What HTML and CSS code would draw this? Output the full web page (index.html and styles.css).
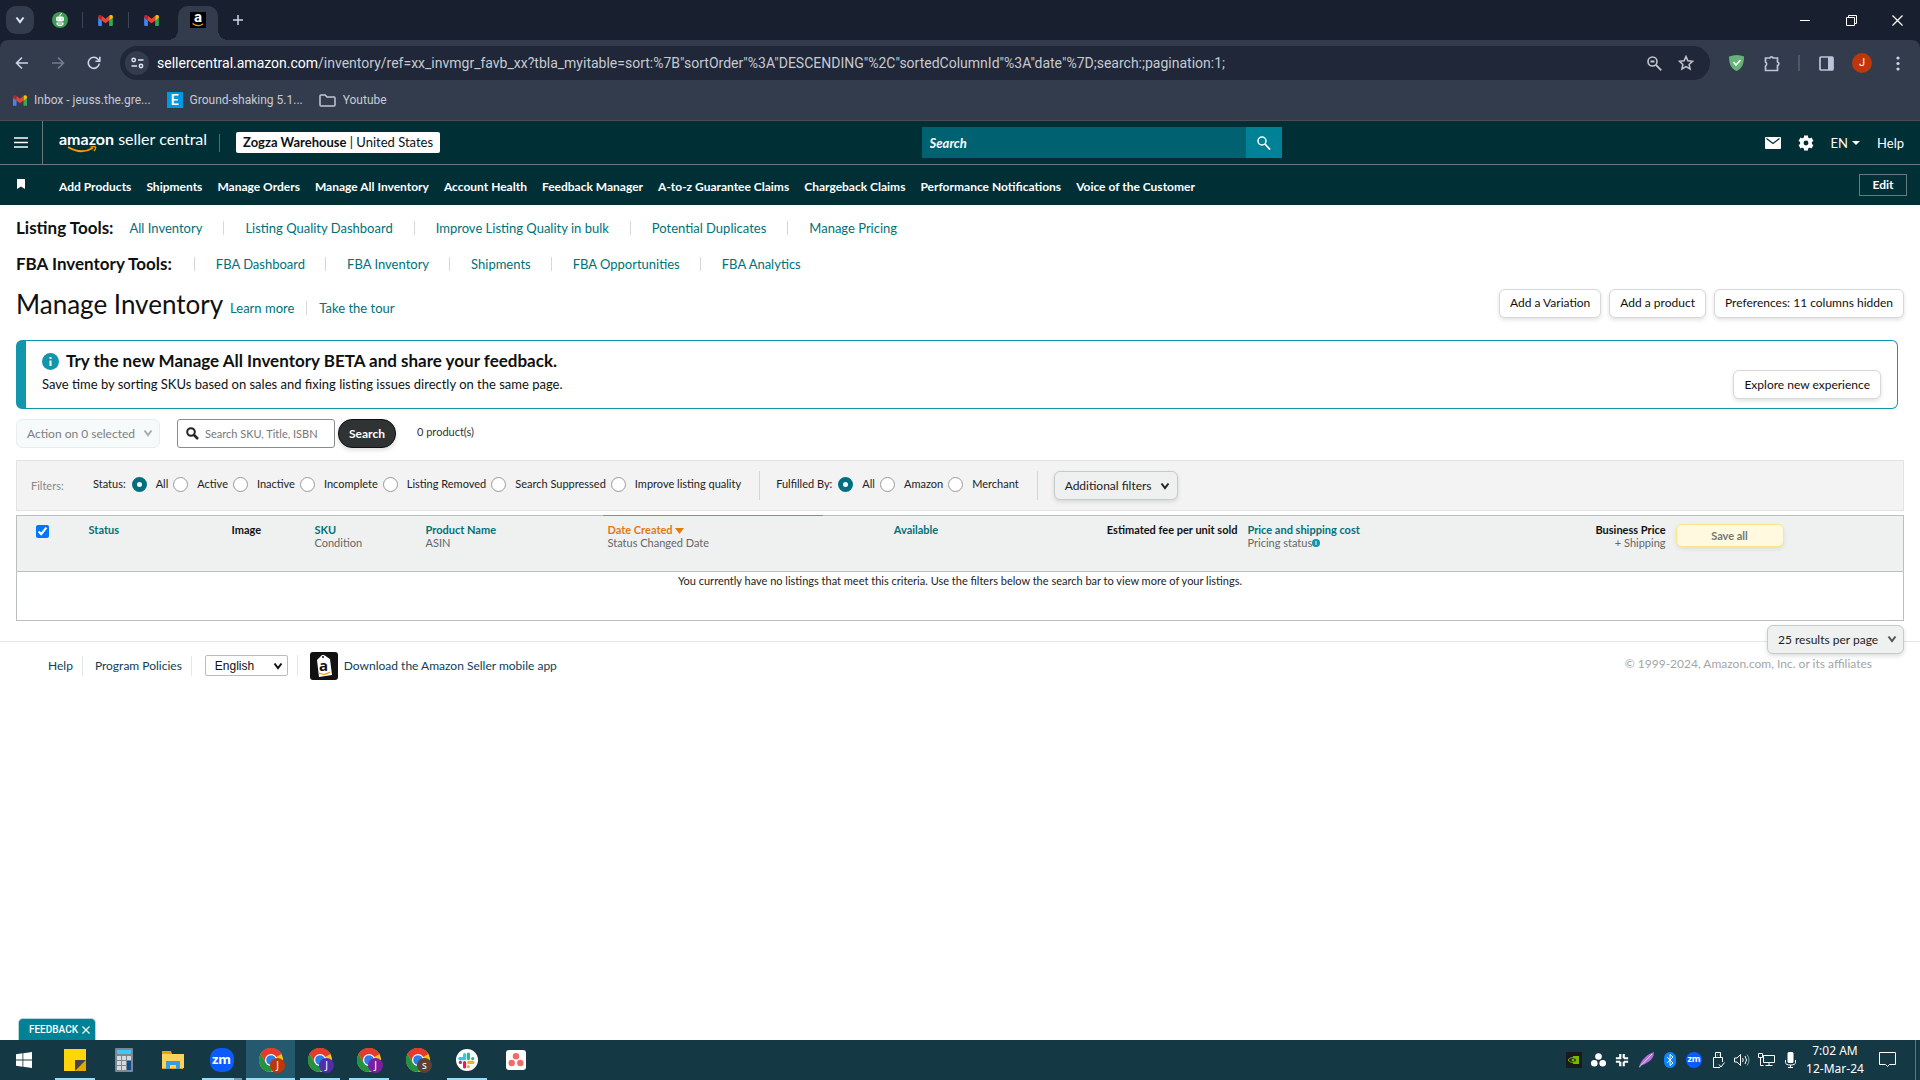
FILE: index.html
```html
<!DOCTYPE html>
<html lang="en">
<head>
<meta charset="utf-8">
<title>Manage Inventory</title>
<link rel="stylesheet" href="styles.css">
</head>
<body>
<svg class="defs" aria-hidden="true">
  <symbol id="gmail" viewBox="0 0 16 12">
    <path d="M0 1.5V11a1 1 0 0 0 1 1h3V4.5z" fill="#4285f4"/>
    <path d="M16 1.5V11a1 1 0 0 1-1 1h-3V4.5z" fill="#34a853"/>
    <path d="M12 .8 13.4 0C15 -.3 16 .6 16 1.8V3l-4 3z" fill="#fbbc04"/>
    <path d="M4 .8 2.6 0C1 -.3 0 .6 0 1.8V3l4 3z" fill="#c5221f"/>
    <path d="M4 .9 8 4l4-3.1V6L8 9 4 6z" fill="#ea4335"/>
  </symbol>
  <symbol id="chrome" viewBox="0 0 24 24">
    <circle cx="12" cy="12" r="12" fill="#fbc116"/>
    <path d="M12 12 1.6 6A12 12 0 0 1 22.4 6z" fill="#e33b2e"/>
    <path d="M12 6h10.4A12 12 0 0 0 1.6 6L7 15z" fill="#e33b2e"/>
    <path d="M1.6 6A12 12 0 0 0 12 24l5.2-9L12 12 6.8 15z" fill="#229342"/>
    <circle cx="12" cy="12" r="6" fill="#fff"/>
    <circle cx="12" cy="12" r="4.8" fill="#2b7de9"/>
  </symbol>
  <symbol id="chevron" viewBox="0 0 10 8">
    <path d="M1.5 1.5 5 6l3.500-4.500" fill="none" stroke="currentColor" stroke-width="2"/>
  </symbol>
  <symbol id="slack" viewBox="0 0 16 16">
    <g stroke-width="3" stroke-linecap="round">
      <path d="M6.200 2.500v3.500M1.800 6.200h1" stroke="#36c5f0"/><path d="M2 6.200h4" stroke="#36c5f0"/>
      <path d="M9.800 2v4.200M13.800 6.200h.1" stroke="#2eb67d"/>
      <path d="M10 9.800h4M9.800 13.800v.1" stroke="#ecb22e"/>
      <path d="M6.200 10v4M2.200 9.800h.1" stroke="#e01e5a"/>
    </g>
  </symbol>
</svg>

<header class="browser">
  <div class="tabs">
    <button class="tab-search" aria-label="Search tabs"><svg width="10" height="8"><use href="#chevron"/></svg></button>
    <button class="tab tab-line" aria-label="Tab 1"><svg width="16" height="16" viewBox="0 0 16 16"><circle cx="8" cy="8" r="8" fill="#3f9a52"/><path d="M8 4.500V2.500l2-1" stroke="#fff" fill="none"/><rect x="4" y="4.500" width="8" height="5" rx="2" fill="#fff"/><path d="M4.500 10.500h7v2l-2 1.500h-3l-2-1.500z" fill="#fff"/><path d="M6 6.500v1M10 6.500v1M6 12h4" stroke="#3f9a52"/></svg></button>
    <button class="tab tab-line" aria-label="Tab 2"><svg width="15" height="11"><use href="#gmail"/></svg></button>
    <button class="tab" aria-label="Tab 3"><svg width="15" height="11"><use href="#gmail"/></svg></button>
    <button class="tab tab-active" aria-label="Amazon"><span class="fav-a">a<svg width="12" height="4" viewBox="0 0 12 4"><path d="M.5.5Q6 4.500 11 1" fill="none" stroke="#f90" stroke-width="1.300"/></svg></span></button>
    <button class="tab-new" aria-label="New tab"><svg width="12" height="12" viewBox="0 0 12 12"><path d="M6 1v10M1 6h10" stroke="#cdd3ea" stroke-width="1.500"/></svg></button>
    <div class="win">
      <button aria-label="Minimize"><svg width="10" height="10" viewBox="0 0 10 10"><path d="M0 5.500h10" stroke="#fff"/></svg></button>
      <button aria-label="Restore"><svg width="11" height="11" viewBox="0 0 11 11"><path d="M.5 2.500h8v8h-8zM2.500 2.500v-2h8v8h-2" fill="none" stroke="#fff"/></svg></button>
      <button aria-label="Close"><svg width="11" height="11" viewBox="0 0 11 11"><path d="m.5.5 10 10M10.500.5l-10 10" stroke="#fff" stroke-width="1.200"/></svg></button>
    </div>
  </div>
  <div class="toolbar">
    <button class="tool" aria-label="Back"><svg width="14" height="14" viewBox="0 0 14 14"><path d="M13 7H2M7 1.500 1.500 7 7 12.500" fill="none" stroke="#cdd3ea" stroke-width="1.600"/></svg></button>
    <button class="tool" aria-label="Forward"><svg width="14" height="14" viewBox="0 0 14 14"><path d="M1 7h11M7 1.500 12.500 7 7 12.500" fill="none" stroke="#757d90" stroke-width="1.600"/></svg></button>
    <button class="tool" aria-label="Reload"><svg width="14" height="14" viewBox="0 0 14 14"><path d="M12.300 7.500A5.500 5.500 0 1 1 11 3.200l1.500 1.600M12.800.8v4.400H8.400" fill="none" stroke="#cdd3ea" stroke-width="1.600"/></svg></button>
    <div class="omnibox">
      <button class="site" aria-label="Site information"><svg width="13" height="12" viewBox="0 0 13 12"><circle cx="2.700" cy="3" r="1.700" fill="none" stroke="#dfe3f2" stroke-width="1.500"/><path d="M7 3h5.500M.5 9H6" stroke="#dfe3f2" stroke-width="1.600"/><circle cx="10" cy="9" r="1.700" fill="none" stroke="#dfe3f2" stroke-width="1.500"/></svg></button>
      <div class="url" role="textbox" aria-label="Address"><b>sellercentral.amazon.com</b>/inventory/ref=xx_invmgr_favb_xx?tbla_myitable=sort:%7B"sortOrder"%3A"DESCENDING"%2C"sortedColumnId"%3A"date"%7D;search:;pagination:1;</div>
      <button class="omni-btn" aria-label="Zoom"><svg width="15" height="15" viewBox="0 0 15 15"><circle cx="5.500" cy="5.500" r="4.500" fill="none" stroke="#c3c6cf" stroke-width="1.600"/><path d="M3.500 5.500h4M9 9l5.300 5.300" stroke="#c3c6cf" stroke-width="1.800"/></svg></button>
      <button class="omni-btn" aria-label="Bookmark"><svg width="16" height="16" viewBox="0 0 16 16"><path d="m8 1.500 1.900 4.300 4.700.5-3.500 3.100 1 4.600L8 11.600 3.900 14l1-4.600L1.400 6.300l4.700-.5z" fill="none" stroke="#c3c6cf" stroke-width="1.500"/></svg></button>
    </div>
    <button class="tool" aria-label="Extension"><svg width="15" height="16" viewBox="0 0 15 16"><path d="M0 1.500Q8-1.500 15 1.500C15 9 13 13.500 7.500 16 2 13.500 0 9 0 1.500" fill="#67b279"/><path d="m4.500 7 2.500 3 4.500-5" fill="none" stroke="#fff" stroke-width="1.500"/></svg></button>
    <button class="tool" aria-label="Extensions"><svg width="17" height="17" viewBox="0 0 17 17"><path d="M1.500 3h4.300a1.800 1.800 0 0 1 3.400 0h4.300v4a1.800 1.800 0 0 1 0 3.500v5h-12v-4.500a2.300 2.300 0 0 0 0-4z" fill="none" stroke="#bcc4dc" stroke-width="1.700"/></svg></button>
    <span class="tool-line"></span>
    <button class="tool" aria-label="Side panel"><svg width="15" height="15" viewBox="0 0 15 15"><rect x="1" y="1" width="13" height="13" rx="1" fill="none" stroke="#bcc4dc" stroke-width="1.700"/><path d="M9 1h5v13H9z" fill="#bcc4dc"/></svg></button>
    <button class="tool" aria-label="Profile"><span class="avatar">J</span></button>
    <button class="tool" aria-label="Menu"><svg width="4" height="15" viewBox="0 0 4 15"><g fill="#cdd3ea"><circle cx="2" cy="2" r="1.600"/><circle cx="2" cy="7.500" r="1.600"/><circle cx="2" cy="13" r="1.600"/></g></svg></button>
  </div>
  <nav class="bookmarks" aria-label="Bookmarks">
    <a href="#"><svg width="14" height="11"><use href="#gmail"/></svg>Inbox - jeuss.the.gre...</a>
    <a href="#"><span class="fav-e">E</span>Ground-shaking 5.1...</a>
    <a href="#"><svg width="17" height="13" viewBox="0 0 17 13"><path d="M1 2q0-1 1-1h4.200L8 3h7q1 0 1 1v7q0 1-1 1H2q-1 0-1-1z" fill="none" stroke="#c3c6cf" stroke-width="1.500"/></svg>Youtube</a>
  </nav>
</header>

<div class="page">
  <header class="sc-top">
    <div class="sc-left">
      <button class="burger" aria-label="Menu"><svg width="14" height="11" viewBox="0 0 14 11"><path d="M0 1h14M0 5.500h14M0 10h14" stroke="#fff" stroke-width="1.500"/></svg></button>
      <a class="logo" href="#"><span><b>amazon</b> seller central</span><svg width="30" height="7" viewBox="0 0 30 7"><path d="M1 1q13 8 25 1" fill="none" stroke="#f90" stroke-width="1.800"/><path d="M23.500 1q4-.8 5 0t-1.500 4" fill="none" stroke="#f90" stroke-width="1.300"/></svg></a>
      <span class="sc-line"></span>
      <button class="store"><b>Zogza Warehouse</b> | United States</button>
    </div>
    <form class="sc-search">
      <input type="search" placeholder="Search" aria-label="Search">
      <button type="button" aria-label="Search"><svg width="14" height="14" viewBox="0 0 14 14"><circle cx="5" cy="5" r="4" fill="none" stroke="#fff" stroke-width="1.500"/><path d="m8 8 5 5.500" stroke="#fff" stroke-width="1.800"/></svg></button>
    </form>
    <div class="sc-right">
      <a href="#" aria-label="Messages"><svg width="16" height="12" viewBox="0 0 16 12"><rect width="16" height="12" rx="1" fill="#fff"/><path d="m1.500 1.500 6.500 5 6.500-5" fill="none" stroke="#002f36" stroke-width="1.300"/></svg></a>
      <a href="#" aria-label="Settings"><svg width="16" height="16" viewBox="0 0 16 16"><path d="M8 4.500v-4M8 11.500v4M5 6.200 1.500 4.300M11 9.800l3.500 1.900M5 9.800l-3.500 1.900M11 6.200l3.500-1.900" stroke="#fff" stroke-width="4"/><circle cx="8" cy="8" r="4.200" fill="none" stroke="#fff" stroke-width="3.500"/></svg></a>
      <a href="#" class="lang">EN <svg width="8" height="4" viewBox="0 0 8 4"><path d="M0 0h8L4 4z" fill="#fff"/></svg></a>
      <a href="#">Help</a>
    </div>
  </header>
  <nav class="sc-nav" aria-label="Favorites">
    <svg class="mark" width="8" height="10" viewBox="0 0 8 10"><path d="M0 0h8v10L4 7.500 0 10z" fill="#fff"/></svg>
    <a href="#">Add Products</a><a href="#">Shipments</a><a href="#">Manage Orders</a><a href="#">Manage All Inventory</a><a href="#">Account Health</a><a href="#">Feedback Manager</a><a href="#">A-to-z Guarantee Claims</a><a href="#">Chargeback Claims</a><a href="#">Performance Notifications</a><a href="#">Voice of the Customer</a>
    <button class="edit">Edit</button>
  </nav>

  <main class="main">
    <nav class="links" aria-label="Listing tools"><h2>Listing Tools:</h2><a href="#">All Inventory</a><a href="#">Listing Quality Dashboard</a><a href="#">Improve Listing Quality in bulk</a><a href="#">Potential Duplicates</a><a href="#">Manage Pricing</a></nav>
    <nav class="links links-fba" aria-label="FBA inventory tools"><h2>FBA Inventory Tools:</h2><a href="#">FBA Dashboard</a><a href="#">FBA Inventory</a><a href="#">Shipments</a><a href="#">FBA Opportunities</a><a href="#">FBA Analytics</a></nav>

    <div class="title">
      <h1>Manage Inventory</h1>
      <a href="#">Learn more</a><a href="#" class="tour">Take the tour</a>
      <div class="title-actions">
        <button class="btn">Add a Variation</button>
        <button class="btn">Add a product</button>
        <button class="btn">Preferences: 11 columns hidden</button>
      </div>
    </div>

    <section class="alert">
      <div>
        <h2><svg width="17" height="17" viewBox="0 0 17 17"><circle cx="8.500" cy="8.500" r="8.500" fill="#1196ab"/><path d="M8.500 7.500v5.500M8.500 4v2" stroke="#fff" stroke-width="2"/></svg>Try the new Manage All Inventory BETA and share your feedback.</h2>
        <p>Save time by sorting SKUs based on sales and fixing listing issues directly on the same page.</p>
      </div>
      <button class="btn">Explore new experience</button>
    </section>

    <form class="actions">
      <span class="pick pick-off"><select aria-label="Bulk action" disabled><option>Action on 0 selected</option></select><svg width="10" height="8"><use href="#chevron"/></svg></span>
      <label class="sku"><svg width="13" height="13" viewBox="0 0 13 13"><circle cx="5" cy="5" r="3.800" fill="none" stroke="#222" stroke-width="2"/><path d="m8 8 4 4" stroke="#222" stroke-width="2.500"/></svg><input type="text" aria-label="Search inventory" placeholder="Search SKU, Title, ISBN"></label>
      <button type="button" class="go">Search</button>
      <span class="count">0 product(s)</span>
    </form>

    <form class="filters">
      <span class="f-name">Filters:</span>
      <fieldset>
        <span class="f-lab">Status:</span>
        <label><input type="radio" name="status" checked>All</label>
        <label><input type="radio" name="status">Active</label>
        <label><input type="radio" name="status">Inactive</label>
        <label><input type="radio" name="status">Incomplete</label>
        <label><input type="radio" name="status">Listing Removed</label>
        <label><input type="radio" name="status">Search Suppressed</label>
        <label><input type="radio" name="status">Improve listing quality</label>
      </fieldset>
      <fieldset>
        <span class="f-lab">Fulfilled By:</span>
        <label><input type="radio" name="by" checked>All</label>
        <label><input type="radio" name="by">Amazon</label>
        <label><input type="radio" name="by">Merchant</label>
      </fieldset>
      <button type="button" class="btn btn-gray">Additional filters<svg width="10" height="8"><use href="#chevron"/></svg></button>
    </form>

    <table class="grid">
      <colgroup><col class="c-check"><col class="c-status"><col class="c-image"><col class="c-sku"><col class="c-name"><col class="c-date"><col class="c-avail"><col class="c-fee"><col class="c-price"><col class="c-biz"><col></colgroup>
      <thead>
        <tr>
          <th class="check"><input type="checkbox" checked aria-label="Select all"></th>
          <th><a href="#">Status</a></th>
          <th>Image</th>
          <th><a href="#">SKU</a><small>Condition</small></th>
          <th><a href="#">Product Name</a><small>ASIN</small></th>
          <th class="sorted"><a href="#">Date Created <svg width="9" height="6" viewBox="0 0 9 6"><path d="M0 0h9L4.500 6z" fill="#e47911"/></svg></a><small>Status Changed Date</small></th>
          <th class="mid"><a href="#">Available</a></th>
          <th class="end">Estimated fee per unit sold</th>
          <th><a href="#">Price and shipping cost</a><small>Pricing status<svg width="8" height="8" viewBox="0 0 8 8"><circle cx="4" cy="4" r="4" fill="#1196ab"/><path d="M4 2v4" stroke="#fff"/></svg></small></th>
          <th class="end">Business Price<small>+ Shipping</small></th>
          <th><button class="save">Save all</button></th>
        </tr>
      </thead>
      <tbody><tr><td colspan="11">You currently have no listings that meet this criteria. Use the filters below the search bar to view more of your listings.</td></tr></tbody>
    </table>
    <span class="pick per-page"><select aria-label="Results per page"><option>25 results per page</option></select><svg width="10" height="8"><use href="#chevron"/></svg></span>
  </main>

  <footer class="foot">
    <a href="#">Help</a>
    <a href="#">Program Policies</a>
    <span class="foot-lang"><select aria-label="Language"><option>English</option></select><svg width="10" height="8"><use href="#chevron"/></svg></span>
    <a href="#" class="app"><svg width="28" height="28" viewBox="0 0 28 28"><rect width="28" height="28" rx="3" fill="#111"/><path d="m7 8 5-5h2l6 4 2 16-13 2z" fill="#fff"/><circle cx="13" cy="5" r="1" fill="#111"/><text x="9" y="19" font-family="Open Sans, sans-serif" font-weight="700" font-size="15" fill="#111">a</text><path d="M9 21q6 3 11-1" fill="none" stroke="#f90" stroke-width="1.300"/></svg>Download the Amazon Seller mobile app</a>
    <small class="copy">© 1999-2024, Amazon.com, Inc. or its affiliates</small>
  </footer>
  <button class="feedback">FEEDBACK <svg width="8" height="8" viewBox="0 0 8 8"><path d="m.5.5 7 7M7.500.5l-7 7" stroke="#fff" stroke-width="1.200"/></svg></button>
</div>

<footer class="taskbar">
  <button class="start" aria-label="Start"><svg width="16" height="16" viewBox="0 0 16 16"><path d="M0 2.300 6.500 1.300v6.300H0zM7.300 1.200 16 0v7.600H7.300zM0 8.400h6.500v6.300L0 13.700zM7.300 8.400H16V16l-8.700-1.200z" fill="#fff"/></svg></button>
  <button class="app-btn open" aria-label="Sticky Notes"><svg width="22" height="22" viewBox="0 0 22 22"><path d="M0 0h22v22H0z" fill="#ffd60a"/><path d="M22 11v11H11z" fill="#e6a800"/><path d="M11 11h11L11 22z" fill="#444"/></svg></button>
  <button class="app-btn" aria-label="Calculator"><svg width="18" height="24" viewBox="0 0 18 24"><rect width="18" height="24" rx="1" fill="#7d8792"/><path d="M2 2h14v4H2z" fill="#40c8f4"/><path d="M2 8h4v4H2zM7 8h4v4H7zM12 8h4v4h-4zM2 13h4v4H2zM7 13h4v4H7zM2 18h4v4H2zM7 18h4v4H7z" fill="#d5dade"/><path d="M12 13h4v9h-4z" fill="#0d4d8c"/></svg></button>
  <button class="app-btn" aria-label="File Explorer"><svg width="22" height="18" viewBox="0 0 22 18"><path d="M0 0h9l1 3h11v15H0z" fill="#e5a50a"/><path d="M0 3h22v14H0z" fill="#fbd25c"/><path d="M4 18v-8h14v8h-4v-4H8v4z" fill="#3b9be0"/></svg></button>
  <button class="app-btn open stacked" aria-label="Zoom"><span class="zm">zm</span></button>
  <button class="app-btn active" aria-label="Chrome J"><svg width="24" height="24"><use href="#chrome"/></svg><span class="badge b-red">J</span></button>
  <button class="app-btn open" aria-label="Chrome J"><svg width="24" height="24"><use href="#chrome"/></svg><span class="badge b-indigo">J</span></button>
  <button class="app-btn open" aria-label="Chrome J"><svg width="24" height="24"><use href="#chrome"/></svg><span class="badge b-purple">J</span></button>
  <button class="app-btn" aria-label="Chrome S"><svg width="24" height="24"><use href="#chrome"/></svg><span class="badge b-brown">s</span></button>
  <button class="app-btn open" aria-label="Slack"><span class="slack"><svg width="17" height="17"><use href="#slack"/></svg></span></button>
  <button class="app-btn" aria-label="Asana"><svg width="20" height="20" viewBox="0 0 20 20"><rect width="20" height="20" rx="3" fill="#fff"/><g fill="#f06a6a"><circle cx="10" cy="6.200" r="3.200"/><circle cx="5.700" cy="13" r="3.200"/><circle cx="14.300" cy="13" r="3.200"/></g></svg></button>
  <div class="tray">
    <button aria-label="NVIDIA"><svg width="16" height="16" viewBox="0 0 16 16"><path d="M0 0h16v16H0z" fill="#1a1a1a"/><path d="M7 4h6v8H7z" fill="#76b900"/><path d="M2 8q4-5 9 0-5 5-9 0" fill="#1a1a1a" stroke="#76b900"/><circle cx="7" cy="8" r="1.500" fill="#76b900"/></svg></button>
    <button aria-label="Asana"><svg width="15" height="14" viewBox="0 0 15 14"><g fill="#fff"><circle cx="7.500" cy="3.500" r="3.300"/><circle cx="3.300" cy="10.300" r="3.300"/><circle cx="11.700" cy="10.300" r="3.300"/></g></svg></button>
    <button aria-label="Slack"><svg width="14" height="14" viewBox="0 0 16 16"><path d="M6 1v6M1 6h5M10 1v5M10 6h5M10 10h5M10 10v5M6 10v5M1 10h5" stroke="#fff" stroke-width="2.500"/></svg></button>
    <button aria-label="Pen"><svg width="15" height="16" viewBox="0 0 15 16"><path d="M0 15C2 8 8 2 15 0q0 6-5 9.500Q5 13 2 13z" fill="#b06fd8"/><path d="M0 15.500 13 2" stroke="#e9d3f7"/></svg></button>
    <button aria-label="Bluetooth"><svg width="12" height="16" viewBox="0 0 12 16"><rect width="12" height="16" rx="6" fill="#0a84ff"/><path d="m3 5 6 6-3 2.500v-11L9 5l-6 6" fill="none" stroke="#fff"/></svg></button>
    <button aria-label="Zoom"><span class="zm zm-small">zm</span></button>
    <button aria-label="USB"><svg width="13" height="17" viewBox="0 0 13 17"><path d="M3.500 5V.5h5V5M8 15.500H1.500v-10h9V10M7 12.500l2 2.500 3.500-4.500M5 3h.5M7 3h.5" fill="none" stroke="#fff"/></svg></button>
    <button aria-label="Volume"><svg width="16" height="14" viewBox="0 0 16 14"><path d="M.5 5v4h2.500L6.500 12.500v-11L3 5zM8.500 5q1.500 2 0 4M11 3q3 4 0 8" fill="none" stroke="#fff"/><path d="M13 1.500q4 5.500 0 11" fill="none" stroke="#8aa"/></svg></button>
    <button aria-label="Network"><svg width="17" height="14" viewBox="0 0 17 14"><path d="M5.500 2.500h11v7h-11zM11 9.500v3M7.500 12.500h7M.5.500h4v4h-4zM2.500 4.500v8h3" fill="none" stroke="#fff"/></svg></button>
    <button aria-label="Microphone"><svg width="11" height="16" viewBox="0 0 11 16"><rect x="2.500" width="6" height="11" rx="1.500" fill="#fff"/><path d="M.5 8v2.500q0 2.500 5 2.500t5-2.500V8M5.500 13v3M3 15.500h5" fill="none" stroke="#fff"/></svg></button>
  </div>
  <time class="clock">7:02 AM<br>12-Mar-24</time>
  <button class="notes" aria-label="Notifications"><svg width="17" height="16" viewBox="0 0 17 16"><path d="M.5.500h16v12h-6l-2 2-2-2h-6z" fill="none" stroke="#fff"/></svg></button>
</footer>
</body>
</html>
```
FILE: styles.css
```css
* { box-sizing: border-box; }
body {
  margin: 0;
  min-height: 100vh;
  display: flex;
  flex-direction: column;
  font-family: Lato, "Noto Sans", sans-serif;
  font-size: 13px;
  line-height: 20px;
  color: #0f1111;
  background: #fff;
}
button, input, select { font: inherit; color: inherit; margin: 0; }
button { border: 0; padding: 0; background: none; }
a { color: #00717a; text-decoration: none; }
h1, h2, p { margin: 0; }
svg { flex: none; }
.defs { position: absolute; width: 0; height: 0; }

/* Browser frame */
.browser {
  background: #18202f;
  border-bottom: 1px solid #4a4d52;
  color: #c7cad1;
  font-family: Roboto, "Noto Sans", sans-serif;
}
.tabs { display: flex; align-items: center; height: 40px; padding-left: 6px; }
.tabs button { display: flex; align-items: center; justify-content: center; }
.tab-search { width: 28px; height: 28px; margin-right: 3px; border-radius: 10px; background: #333c4d; color: #e3e6f0; }
.tabs .tab { width: 46px; height: 16px; border-right: 1px solid transparent; }
.tabs .tab-line { border-color: #3c4557; }
.tabs .tab-active { position: relative; width: 40px; height: 34px; margin: 6px 4px 0 3px; padding-bottom: 6px; border: 0; border-radius: 10px 10px 0 0; background: #333c4d; }
.tab-active::before, .tab-active::after { content: ""; position: absolute; bottom: 0; width: 10px; height: 10px; }
.tab-active::before { right: 100%; background: radial-gradient(circle at 0 0, #18202f 10px, #333c4d 10px); }
.tab-active::after { left: 100%; background: radial-gradient(circle at 100% 0, #18202f 10px, #333c4d 10px); }
.fav-a { width: 16px; height: 16px; display: flex; flex-direction: column; align-items: center; background: #000; color: #fff; font-weight: 700; font-size: 15px; line-height: 11px; }
.tab-new { width: 32px; height: 28px; }
.win { display: flex; margin-left: auto; }
.win button { width: 46px; height: 40px; }
.toolbar { display: flex; align-items: center; padding: 6px 4px; border-radius: 8px 8px 0 0; background: #333c4d; }
.tool { width: 36px; height: 34px; display: flex; align-items: center; justify-content: center; }
.omnibox { flex: 1; min-width: 0; display: flex; align-items: center; height: 34px; margin: 0 8px; padding: 0 8px 0 5px; border-radius: 17px; background: #1f2738; }
.site { width: 24px; height: 24px; display: flex; align-items: center; justify-content: center; border-radius: 50%; background: #333c4d; }
.url { flex: 1; min-width: 0; margin-left: 8px; overflow: hidden; white-space: nowrap; font-size: 14px; }
.url b { font-weight: 400; color: #fff; }
.omni-btn { width: 32px; height: 32px; display: flex; align-items: center; justify-content: center; }
.tool-line { width: 2px; height: 16px; margin: 0 8px; background: #4d576b; }
.avatar { width: 20px; height: 20px; border-radius: 50%; background: #bf360c; color: #fff; font-size: 11px; line-height: 20px; text-align: center; }
.bookmarks { display: flex; gap: 16px; height: 34px; align-items: center; padding: 0 13px 6px; background: #333c4d; font-size: 12px; }
.bookmarks a { display: flex; align-items: center; gap: 7px; color: inherit; }
.fav-e { width: 16px; height: 16px; background: #0099e5; color: #fff; font-weight: 600; font-size: 14px; line-height: 16px; text-align: center; }

/* Seller Central header */
.page { position: relative; flex: 1; display: flex; flex-direction: column; }
.sc-top, .sc-nav { background: #002f36; color: #fff; }
.sc-top a, .sc-nav a { color: #fff; }
.sc-top { display: flex; align-items: center; height: 44px; border-bottom: 1px solid #667b7f; }
.sc-left { width: 48%; height: 100%; display: flex; align-items: center; }
.burger { width: 43px; height: 100%; border-right: 1px solid #667b7f; }
.logo { display: flex; flex-direction: column; margin-left: 16px; font-size: 16px; line-height: 14px; }
.logo svg { margin: 0 8px; }
.sc-line { width: 1px; height: 18px; margin: 0 16px 0 12px; background: #4d6d72; }
.store { height: 21px; padding: 0 7px; border-radius: 2px; background: #fff; color: #0f1111; line-height: 21px; }
.sc-search { display: flex; width: 360px; height: 31px; }
.sc-search input { flex: 1; min-width: 0; padding: 0 8px; border: 0; background: #006170; font-weight: 700; font-style: italic; }
.sc-search input::placeholder { color: #fff; }
.sc-search button { display: flex; align-items: center; justify-content: center; width: 36px; background: #008296; }
.sc-right { display: flex; align-items: center; gap: 17px; margin-left: auto; padding-right: 16px; }
.sc-right a { display: flex; align-items: center; gap: 4px; }
.sc-nav { display: flex; align-items: center; gap: 15px; height: 40px; padding: 3px 13px 0 17px; font-size: 12px; font-weight: 700; }
.mark { margin: 0 19px 5px 0; }
.edit { width: 48px; height: 22px; margin: 0 0 4px auto; border: 1px solid #667b7f; }

/* Content */
.main { position: relative; padding: 12px 16px 0; }
.links { display: flex; align-items: center; height: 22px; margin-bottom: 14px; }
.links h2 { font-size: 17px; line-height: 22px; }
.links a { margin-left: 21px; padding-left: 21px; border-left: 1px solid #d5d9d9; line-height: 14px; }
.links h2 + a { margin-left: 16px; padding-left: 0; border: 0; }
.links-fba a { margin-left: 20px; }
.links-fba h2 + a { margin-left: 22px; padding-left: 21px; border-left: 1px solid #d5d9d9; }
.title { display: flex; align-items: center; height: 32px; margin-bottom: 19px; }
.title h1 { font-size: 26px; font-weight: 400; line-height: 32px; margin: 0 7px 2px 0; }
.title a { line-height: 14px; margin-top: 6px; }
.title .tour { margin-left: 12px; padding-left: 12px; border-left: 1px solid #d5d9d9; }
.title-actions { display: flex; gap: 8px; margin: 0 0 4px auto; }
.btn { height: 29px; padding: 0 10px; border: 1px solid #d5d9d9; border-radius: 6px; background: #fff; box-shadow: 0 2px 4px rgba(15, 17, 17, .12); font-size: 12px; white-space: nowrap; }
.btn-gray { display: flex; align-items: center; gap: 8px; padding-right: 7px; border-color: #c5caca; background: #eff1f1; color: #222; }
.alert { display: flex; justify-content: space-between; align-items: flex-start; min-height: 69px; margin-right: 6px; padding: 9px 16px; border: 1px solid #1196ab; border-left-width: 10px; border-radius: 6px; }
.alert h2 { display: flex; align-items: center; gap: 7px; font-size: 17px; line-height: 22px; }
.alert p { line-height: 20px; margin-top: 2px; }
.alert .btn { margin-top: 20px; }
.actions { display: flex; align-items: center; margin-top: 10px; }
.pick { position: relative; display: flex; }
.pick select { appearance: none; height: 29px; padding: 0 10px; border: 1px solid #c5caca; border-radius: 6px; background: #eff1f1; color: #222; box-shadow: 0 2px 4px rgba(15, 17, 17, .15); font-size: 12px; }
.pick svg { position: absolute; right: 7px; top: 10px; color: #555; pointer-events: none; }
.pick-off select { width: 144px; opacity: 1; border-color: #e7eeee; background: #f7fafa; color: #7c8080; box-shadow: none; }
.pick-off svg { color: #aaa; }
.sku { display: flex; align-items: center; width: 158px; height: 29px; margin-left: 17px; padding-left: 8px; border: 1px solid #888c8c; border-radius: 3px; }
.sku input { flex: 1; min-width: 0; border: 0; padding: 0 6px; font-size: 11px; outline: 0; }
.sku input::placeholder { color: #767676; }
.go { width: 58px; height: 29px; margin-left: 3px; border: 1px solid #111; border-radius: 14px; background: #303333; color: #fff; font-weight: 700; font-size: 12px; box-shadow: 0 2px 4px rgba(15, 17, 17, .15); }
.count { margin: 0 0 4px 21px; font-size: 11px; color: #333; }
.filters { display: flex; align-items: center; height: 51px; margin-top: 12px; padding-left: 14px; border: 1px solid #e3e3e3; background: #f3f3f3; font-size: 11px; color: #222; }
.f-name { width: 62px; color: #888; }
.filters fieldset { display: flex; align-items: center; height: 29px; margin: 0 16px 0 0; padding: 0 18px 3px 0; border: 0; border-right: 1px solid #d5d5d5; }
.f-lab { margin-right: 6px; }
.filters label { display: flex; align-items: center; gap: 9px; margin-right: 5px; }
.filters label:last-child { margin-right: 0; }
.filters input { appearance: none; width: 15px; height: 15px; border: 1px solid #999; border-radius: 50%; background: #fff; }
.filters input:checked { border: 5px solid #006f80; }
.grid { width: 100%; margin-top: 4px; border-collapse: collapse; table-layout: fixed; border: 1px solid #bbbfbf; font-size: 11px; line-height: 13px; }
.c-check { width: 67px; }
.c-status { width: 143px; }
.c-image { width: 83px; }
.c-sku { width: 111px; }
.c-name { width: 182px; }
.c-date { width: 220px; }
.c-avail { width: 187px; }
.c-fee { width: 233px; }
.c-price { width: 207px; }
.c-biz { width: 221px; }
.grid th { height: 56px; padding: 7px 5px 0; vertical-align: top; text-align: left; background: #eff1f1; border-top: 1px solid #bbbfbf; border-bottom: 1px solid #bbbfbf; }
.grid small { display: block; font-size: 11px; font-weight: 400; color: #666; }
.grid th.sorted { border-top-color: #e47911; }
.grid .sorted a { color: #e47911; }
.grid th.check { padding: 9px 19px 0; }
.check input { display: block; width: 13px; height: 13px; }
.grid th.mid { text-align: center; }
.grid th.end { text-align: right; }
.save { width: 108px; height: 23px; margin-top: 1px; border: 1px solid #ffe48a; border-radius: 6px; background: #fff9e0; color: #777; box-shadow: 0 2px 4px rgba(15, 17, 17, .08); }
.grid td { height: 49px; padding: 2px 0; vertical-align: top; text-align: center; color: #222; }
.per-page { position: absolute; right: 16px; top: 420px; z-index: 1; }
.per-page select { width: 137px; }
.foot { display: flex; align-items: center; height: 48px; margin-top: 20px; padding: 0 48px 0 36px; border-top: 1px solid #e3e6e6; font-size: 12px; }
.foot a { padding: 0 9px 0 12px; color: #0f4054; line-height: 20px; border-right: 1px solid #e3e6e6; }
.foot-lang { position: relative; padding: 0 9px 0 13px; border-right: 1px solid #e3e6e6; }
.foot-lang select { appearance: none; display: block; width: 83px; height: 21px; padding: 0 9px; border: 1px solid #bbb; border-radius: 2px; background: #fff; font: 12px "Liberation Sans", sans-serif; }
.foot-lang svg { position: absolute; right: 14px; top: 7px; }
.foot .app { display: flex; align-items: center; gap: 6px; border: 0; }
.copy { margin: 0 0 4px auto; font-size: 12px; color: #a3a6a6; }
.feedback { position: absolute; left: 18px; bottom: 0; display: flex; align-items: center; justify-content: flex-end; gap: 4px; width: 78px; height: 22px; padding-right: 5px; border: 1px solid #b5d5da; border-bottom: 0; border-radius: 5px 5px 0 0; background: #008296; color: #fff; font: 500 10px Roboto, sans-serif; }

/* Taskbar */
.taskbar { display: flex; height: 40px; background: #143844; color: #fff; font-family: "Noto Sans", sans-serif; }
.taskbar::after { content: ""; width: 1px; margin-right: 4px; background: #5c7680; }
.taskbar button { display: flex; align-items: center; justify-content: center; }
.start { width: 48px; margin-right: 2px; }
.app-btn { position: relative; width: 49px; }
.open::after, .active::after { content: ""; position: absolute; left: 5px; right: 4px; bottom: 0; height: 2px; background: #9bdcf5; }
.active { background: #24596e; }
.active::after { left: 0; right: 0; }
.stacked::after { border-right: 8px solid #6d9db0; }
.zm { width: 24px; height: 24px; border-radius: 10px; background: #0b5cff; font-weight: 700; font-size: 13px; line-height: 22px; text-align: center; }
.zm-small { width: 16px; height: 16px; border-radius: 8px; font-size: 9px; line-height: 14px; }
.badge { position: absolute; right: 10px; bottom: 7px; width: 15px; height: 15px; border-radius: 50%; font-size: 10px; line-height: 15px; text-align: center; }
.b-red { background: #bf360c; }
.b-indigo { background: #512da8; }
.b-purple { background: #7b1fa2; }
.b-brown { background: #5d4037; }
.slack { display: flex; align-items: center; justify-content: center; width: 22px; height: 22px; border-radius: 50%; background: #fff; }
.tray { display: flex; margin-left: auto; }
.tray button { width: 24px; }
.clock { width: 66px; padding-top: 2px; font-size: 12px; line-height: 18px; text-align: center; }
.notes { width: 38px; margin-right: 9px; }
```
